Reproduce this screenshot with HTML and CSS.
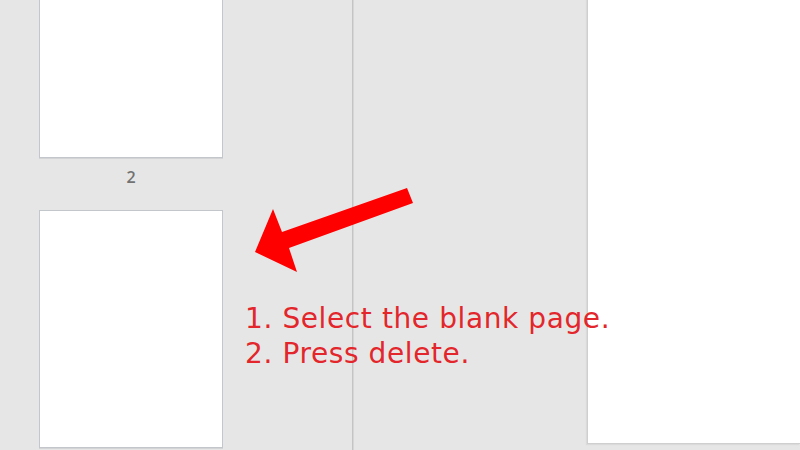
FILE: index.html
```html
<!DOCTYPE html>
<html>
<head>
<meta charset="utf-8">
<link rel="stylesheet" href="styles.css">
</head>
<body>
<div class="app">
  <aside class="thumbs">
    <div class="thumb-list">
      <div class="thumb"></div>
      <div class="thumb-label">2</div>
      <div class="thumb thumb-last"></div>
    </div>
  </aside>
  <main class="doc">
    <div class="page"></div>
  </main>
  <svg class="arrow" width="800" height="450" viewBox="0 0 800 450">
    <polygon points="255,252 273,209 282,232 407,188 413,203 289,248 297,272" fill="#ff0000"/>
  </svg>
  <div class="note">
    <div>1. Select the blank page.</div>
    <div>2. Press delete.</div>
  </div>
</div>
</body>
</html>
```
FILE: styles.css
```css
html, body {
  margin: 0;
  padding: 0;
  background: #e6e6e6;
}
.app {
  position: relative;
  width: 800px;
  height: 450px;
  overflow: hidden;
  display: flex;
  background: #e6e6e6;
}
.thumbs {
  width: 352px;
  flex: none;
  border-right: 1px solid #c4c4c4;
  box-shadow: 1px 0 0 #d6d6d6;
}
.thumb-list {
  margin-top: -79px;
  padding-left: 39px;
  display: flex;
  flex-direction: column;
  width: 184px;
}
.thumb {
  height: 235px;
  background: #ffffff;
  border: 1px solid #c3c6ca;
  box-shadow: 0 1px 0 #d2d4d6;
}
.thumb-last {
  height: 236px;
}
.thumb-label {
  height: 52px;
  padding-top: 9px;
  box-sizing: border-box;
  text-align: center;
  font-family: "Open Sans", "Noto Sans", sans-serif;
  font-size: 16px;
  line-height: 20px;
  font-weight: 600;
  color: #727272;
}
.doc {
  flex: 1;
  padding-left: 234px;
}
.page {
  margin-top: -20px;
  height: 463px;
  background: #ffffff;
  border-left: 1px solid #cfcfcf;
  border-bottom: 1px solid #cfcfcf;
  box-shadow: -1px 1px 1px #dadada;
}
.arrow {
  position: absolute;
  left: 0;
  top: 0;
  pointer-events: none;
}
.note {
  position: absolute;
  left: 245px;
  top: 301px;
  font-family: "DejaVu Sans", Verdana, sans-serif;
  font-size: 28px;
  line-height: 35px;
  letter-spacing: 0.6px;
  color: #e3262b;
  white-space: nowrap;
}
```
